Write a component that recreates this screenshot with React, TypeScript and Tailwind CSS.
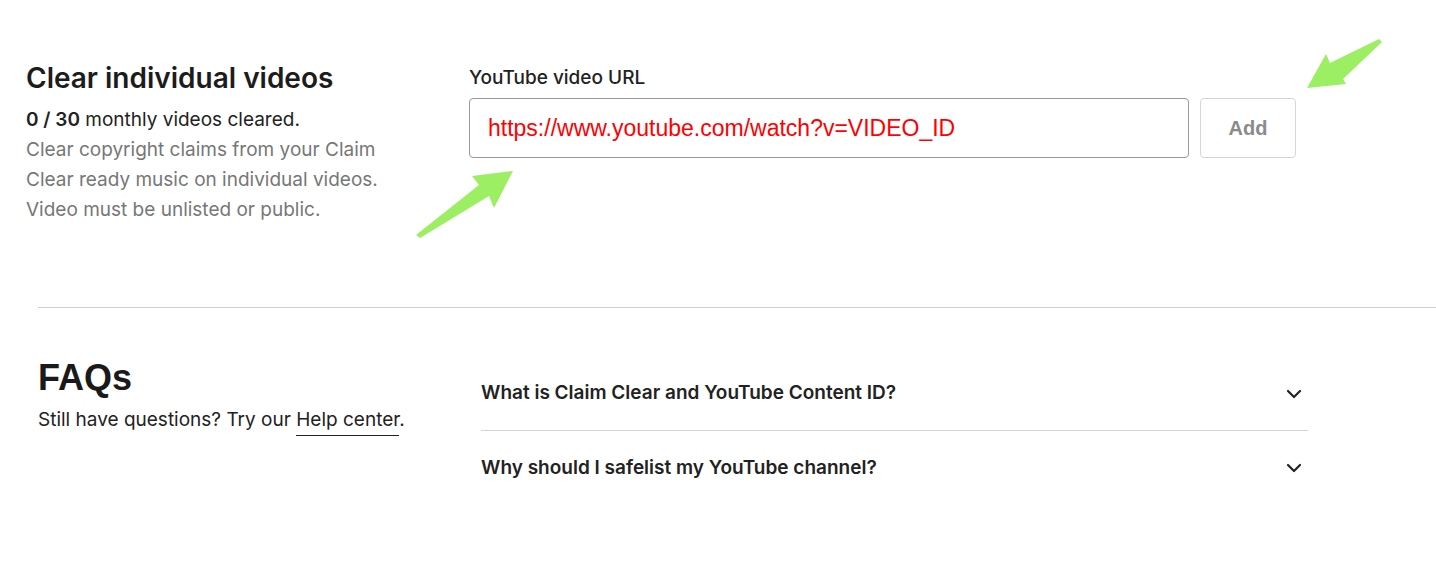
import React from "react";

const sans = { fontFamily: 'Inter, "Liberation Sans", Arial, sans-serif' };
const arial = { fontFamily: '"Liberation Sans", Arial, sans-serif' };

function Chevron() {
  return (
    <svg width="16" height="10" viewBox="0 0 16 10" fill="none">
      <path d="M2 2l6 6 6-6" stroke="#222" strokeWidth="2.2" strokeLinecap="round" strokeLinejoin="round" />
    </svg>
  );
}

// green annotation arrows drawn over the page
function Arrows() {
  return (
    <svg className="absolute inset-0 pointer-events-none" width="1436" height="585" viewBox="0 0 1436 585">
      <polygon points="416,235 479,185 472,176 513,171 494,208 489,196 420,238" fill="#9cee62" />
      <polygon points="1382,42 1343,79 1346,84 1307,88 1326,54 1330,63 1379,39" fill="#9cee62" />
    </svg>
  );
}

export default function App() {
  const faqs = ["What is Claim Clear and YouTube Content ID?", "Why should I safelist my YouTube channel?"];
  return (
    <div className="relative w-[1436px] h-[585px] bg-white overflow-hidden text-[#222]" style={sans}>
      {/* top section */}
      <div className="flex pt-[61px] pl-[26px] h-[307px]">
        <div className="w-[443px]">
          <h2 className="text-[28px] leading-[34px] font-semibold text-[#1c1c1c]">Clear individual videos</h2>
          <div className="mt-[10px] text-[19px] leading-[30px]">
            <p className="text-[#222]">
              <span className="font-semibold">0 / 30</span> monthly videos cleared.
            </p>
            <p className="text-[#777] w-[380px]">
              Clear copyright claims from your Claim Clear ready music on individual videos. Video must be unlisted or public.
            </p>
          </div>
        </div>
        <div className="pt-[5px]">
          <label className="block text-[19px] leading-[24px] font-medium text-[#222]">YouTube video URL</label>
          <div className="flex gap-[11px] mt-[8px]">
            <div className="w-[720px] h-[60px] border border-[#999] rounded-[4px] flex items-center px-[18px]">
              <span className="text-[23px] text-[#ff0000]" style={arial}>https://www.youtube.com/watch?v=VIDEO_ID</span>
            </div>
            <button className="w-[96px] h-[60px] border border-[#d6d6d6] rounded-[4px] text-[20px] font-bold text-[#8a8a8a]" style={arial}>
              Add
            </button>
          </div>
        </div>
      </div>

      <div className="ml-[38px] border-t border-[#cfcfcf]" />

      {/* FAQ section */}
      <div className="flex pl-[38px] pt-[48px]">
        <div className="w-[443px]">
          <h2 className="text-[36px] leading-[44px] font-bold text-[#1a1a1a]" style={arial}>FAQs</h2>
          <p className="mt-[8px] text-[19px] leading-[24px] text-[#222]">
            Still have questions? Try our{" "}
            <span className="border-b border-[#222] pb-[4px]">Help center</span>.
          </p>
        </div>
        <div className="w-[827px] pt-[1px]">
          {faqs.map((q, i) => (
            <div key={q} className={`flex items-center justify-between h-[74px] pr-[6px] ${i === 0 ? "border-b border-[#d4d4d4]" : ""}`}>
              <span className="text-[19px] font-semibold text-[#222]">{q}</span>
              <Chevron />
            </div>
          ))}
        </div>
      </div>

      <Arrows />
    </div>
  );
}
